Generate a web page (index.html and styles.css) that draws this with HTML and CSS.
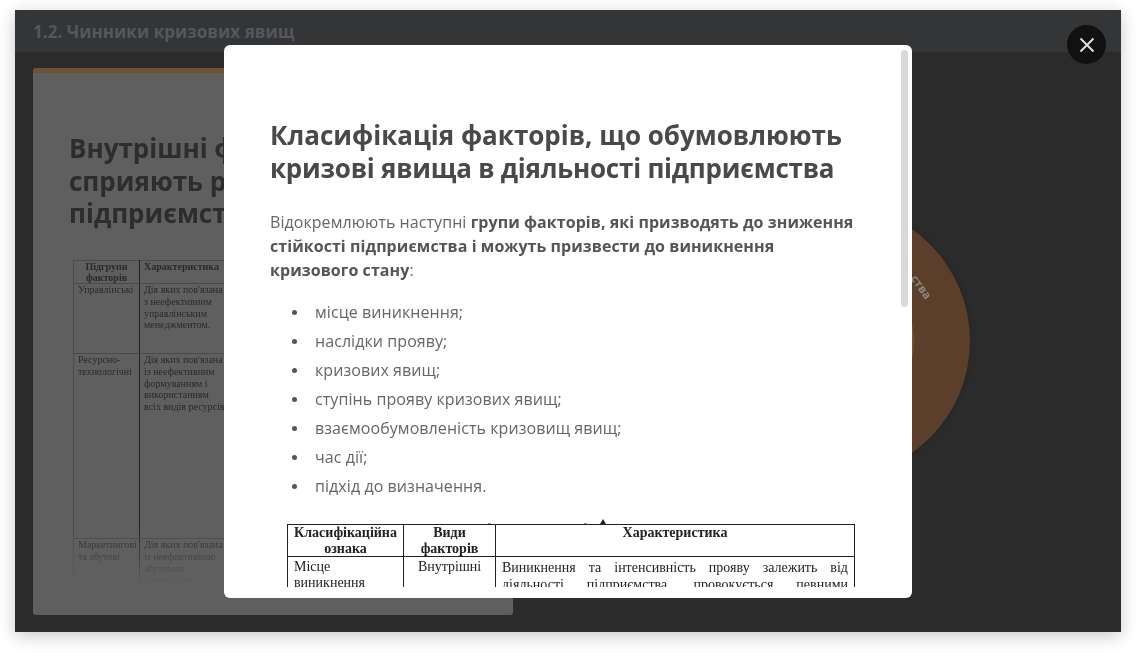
FILE: index.html
```html
<!DOCTYPE html>
<html>

	<head>
		<meta charset="UTF-8">
		<title>1.2. Чинники кризових явищ</title>
		<link rel="stylesheet" href="styles.css">
	</head>

	<body>
		<div class="frame">
			<div class="topbar">1.2. Чинники кризових явищ</div>

			<div class="stage">
				<div class="slide">
					<h2 class="slide-title">Внутрішні фактори, що<br>сприяють розвитку кризи<br>підприємства</h2>
					<div class="scan-wrap">
						<table class="scan">
							<tr class="scan-head">
								<th class="scan-c1">Підгрупи факторів</th>
								<th>Характеристика</th>
							</tr>
							<tr class="scan-r1">
								<td class="scan-c1b">Управлінські</td>
								<td>Дія яких пов'язана<br>з неефективним<br>управлінським<br>менеджментом.</td>
							</tr>
							<tr class="scan-r2">
								<td class="scan-c1b">Ресурсно-<br>технологічні</td>
								<td>Дія яких пов'язана<br>із неефективним<br>формуванням і<br>використанням<br>всіх видів ресурсів</td>
							</tr>
							<tr class="scan-r3">
								<td class="scan-c1b">Маркетингові<br>та збутові</td>
								<td>Дія яких пов'язана<br>із неефективною<br>збутовою<br>діяльністю.</td>
							</tr>
						</table>
					</div>
				</div>

				<div class="circle">
					<div class="circle-inner"></div>
					<span class="circle-text">ства</span>
				</div>
			</div>

			<button class="close" aria-label="Закрити">
				<svg width="16" height="16" viewBox="0 0 16 16">
					<path d="M1.5 1.5L14.5 14.5M14.5 1.5L1.5 14.5" stroke="#dedede" stroke-width="2" fill="none"/>
				</svg>
			</button>

			<div class="modal">
				<div class="modal-body">
					<h1 class="modal-title">Класифікація факторів, що обумовлюють <span class="modal-title-2">кризові явища в діяльності підприємства</span></h1>
					<p class="modal-text">Відокремлюють наступні <b>групи факторів, які призводять до зниження стійкості підприємства і можуть призвести до виникнення кризового стану</b>:</p>
					<ul class="modal-list">
						<li>місце виникнення;</li>
						<li>наслідки прояву;</li>
						<li>кризових явищ;</li>
						<li>ступінь прояву кризових явищ;</li>
						<li>взаємообумовленість кризовищ явищ;</li>
						<li>час дії;</li>
						<li>підхід до визначення.</li>
					</ul>
					<div class="doc-marks"><i></i><i></i><i class="doc-tri"></i></div>
					<table class="doc">
						<tr>
							<th class="doc-c1">Класифікаційна ознака</th>
							<th class="doc-c2">Види факторів</th>
							<th class="doc-c3">Характеристика</th>
						</tr>
						<tr>
							<td>Місце<br>виникнення</td>
							<td class="doc-mid">Внутрішні</td>
							<td class="doc-just">Виникнення та інтенсивність прояву залежить від<br>діяльності підприємства, провокується певними<br>чинниками</td>
						</tr>
					</table>
				</div>
				<div class="scrollbar"></div>
			</div>
		</div>
	</body>

</html>
```

FILE: styles.css
```css
* {
	margin: 0;
	padding: 0;
	box-sizing: border-box;
}

html,
body {
	height: 653px;
	overflow: hidden;
}

body {
	background-color: #fff;
	padding: 10px 15px 21px;
	font-family: "Open Sans", "Noto Sans", sans-serif;
}

.frame {
	position: relative;
	height: 622px;
	background-color: #2b2b2b;
	box-shadow: 0 4px 16px rgba(0, 0, 0, .22);
	overflow: hidden;
}

.topbar {
	height: 42px;
	padding-left: 18px;
	background-color: #333537;
	color: #55575a;
	font-size: 17px;
	font-weight: 700;
	line-height: 43px;
	letter-spacing: .04px;
}

.stage {
	display: flex;
	align-items: flex-start;
	padding: 16px 0 0 18px;
}

.slide {
	flex: none;
	width: 480px;
	height: 547px;
	padding: 59px 0 0 36px;
	background-color: #5f5f5f;
	border-top: 5px solid #6b5433;
	border-radius: 3px;
}

.slide-title {
	width: 500px;
	color: #2e2d2c;
	font-size: 26px;
	font-weight: 700;
	line-height: 32.5px;
	filter: blur(.3px);
}

.scan-wrap {
	width: 420px;
	height: 325px;
	margin: 30px 0 0 4px;
	overflow: hidden;
	-webkit-mask-image: linear-gradient(#000 82%, transparent 100%);
	mask-image: linear-gradient(#000 82%, transparent 100%);
}

.scan {
	width: 420px;
	border-collapse: collapse;
	table-layout: fixed;
	color: #2a2a2a;
	font-family: "Liberation Serif", serif;
	font-size: 10px;
	line-height: 11.8px;
	filter: blur(.4px);
}

.scan th,
.scan td {
	padding: 0 4px;
	vertical-align: top;
	text-align: left;
	white-space: nowrap;
	border: 1px solid #4a4a4a;
}

.scan th {
	line-height: 11.2px;
}

.scan .scan-c1 {
	width: 66px;
	white-space: normal;
	text-align: center;
	border-right-color: #222;
}

.scan .scan-c1b {
	border-right-color: #222;
}

.scan-head {
	height: 23px;
}

.scan-r1 {
	height: 70px;
}

.scan-r2 {
	height: 185px;
}

.scan-r3 {
	height: 60px;
}

.circle {
	position: relative;
	flex: none;
	width: 274px;
	height: 274px;
	margin: 136px 0 0 183px;
	background-color: #5c3f2a;
	border-radius: 50%;
	box-shadow: 0 0 6px rgba(0, 0, 0, .15);
}

.circle-inner {
	position: absolute;
	left: 56px;
	top: 56px;
	width: 162px;
	height: 162px;
	background-color: #6b5a28;
	border-radius: 50%;
}

.circle-text {
	position: absolute;
	left: 212px;
	top: 77px;
	color: #8b8680;
	font-size: 11.5px;
	font-weight: 700;
	line-height: 12px;
	transform: rotate(55deg);
}

.close {
	position: absolute;
	right: 15px;
	top: 15px;
	display: flex;
	align-items: center;
	justify-content: center;
	width: 39px;
	height: 39px;
	background-color: #111;
	border: 0;
	border-radius: 50%;
}

.modal {
	position: absolute;
	left: 209px;
	top: 35px;
	width: 688px;
	height: 553px;
	padding-bottom: 11px;
	background-color: #fff;
	border-radius: 6px;
}

.modal-body {
	height: 542px;
	padding: 74px 57px 0 46px;
	overflow: hidden;
	color: #666;
	filter: blur(.25px);
}

.modal-title {
	color: #494949;
	font-size: 26px;
	font-weight: 700;
	line-height: 33px;
}

.modal-title-2 {
	letter-spacing: -.23px;
}

.modal-text {
	margin-top: 25px;
	font-size: 16px;
	line-height: 24px;
	letter-spacing: .06px;
}

.modal-text b {
	color: #555;
}

.modal-list {
	margin-top: 16px;
	padding-left: 22px;
	list-style: none;
	font-size: 16px;
	line-height: 29px;
	letter-spacing: .07px;
}

.modal-list li {
	display: flex;
	align-items: center;
	gap: 18px;
}

.modal-list li::before {
	content: "";
	flex: none;
	width: 5px;
	height: 5px;
	background-color: #555;
	border-radius: 50%;
}

.doc-marks {
	display: flex;
	align-items: flex-end;
	gap: 93px;
	height: 6px;
	margin: 17px 0 0 218px;
}

.doc-marks i {
	width: 3px;
	height: 1px;
	background-color: #999;
}

.doc-marks .doc-tri {
	width: 0;
	height: 0;
	margin-left: -80px;
	background: none;
	border-left: 3px solid transparent;
	border-right: 3px solid transparent;
	border-bottom: 5px solid #222;
}

.doc {
	width: 568px;
	border-collapse: collapse;
	table-layout: fixed;
	margin-left: 17px;
	color: #222;
	font-family: "Liberation Serif", serif;
	font-size: 14px;
	line-height: 16px;
	filter: blur(.3px);
}

.doc th,
.doc td {
	padding: 2px 6px 1px;
	vertical-align: top;
	border: 1px solid #222;
}

.doc th {
	height: 31px;
	padding-top: 0;
	padding-bottom: 0;
	line-height: 15.5px;
	text-align: center;
}

.doc-c1 {
	width: 116px;
}

.doc-c2 {
	width: 92px;
}

.doc-mid {
	text-align: center;
}

.doc-just {
	text-align: justify;
	text-align-last: justify;
	line-height: 17px;
}

.scrollbar {
	position: absolute;
	right: 4px;
	top: 5px;
	width: 7px;
	height: 257px;
	background-color: #d9d9d9;
	border-radius: 4px;
}
```
